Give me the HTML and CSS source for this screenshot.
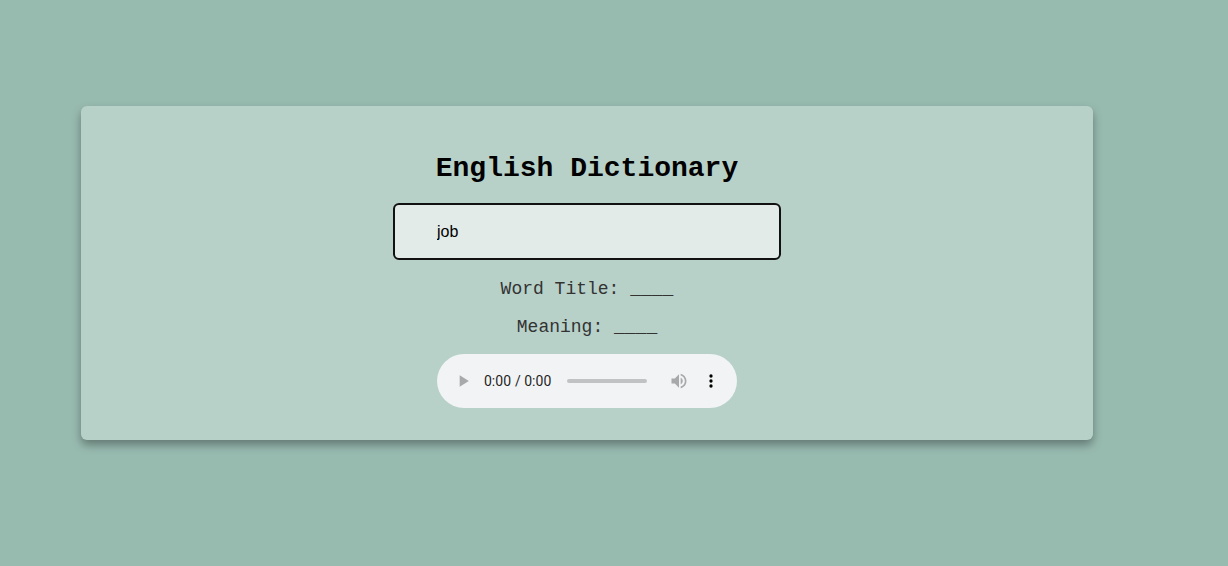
FILE: index.html
```html
<!DOCTYPE html>
<html lang="en">
<head>
<meta charset="utf-8">
<title>English Dictionary</title>
<link rel="stylesheet" href="styles.css">
</head>
<body>
<div class="page">
  <div class="card">
    <h1 class="title">English Dictionary</h1>
    <input class="search" type="text" value="job">
    <p class="line">Word Title: <span class="blank">____</span></p>
    <p class="line meaning">Meaning: <span class="blank">____</span></p>
    <audio class="player" controls></audio>
  </div>
</div>
</body>
</html>
```
FILE: styles.css
```css
html, body {
  margin: 0;
  padding: 0;
  background: #98bbb0;
  height: 100%;
}
.page {
  padding: 106px 0 0 81px;
}
.card {
  width: 1012px;
  height: 334px;
  box-sizing: border-box;
  background: #b7d1c9;
  border-radius: 6px;
  box-shadow: 0 5px 10px rgba(0, 0, 0, 0.35);
  display: flex;
  flex-direction: column;
  align-items: center;
  padding-top: 47px;
}
.title {
  margin: 0;
  font-family: "Liberation Mono", "Courier New", monospace;
  font-size: 28px;
  font-weight: bold;
  line-height: 32px;
  color: #000;
}
.search {
  margin-top: 18px;
  width: 388px;
  height: 57px;
  box-sizing: border-box;
  border: 2px solid #111;
  border-radius: 6px;
  background: #e2ebe8;
  padding: 0 0 0 42px;
  font-family: "Liberation Sans", Arial, sans-serif;
  font-size: 16px;
  color: #000;
  outline: none;
}
.line {
  margin: 19px 0 0;
  font-family: "Liberation Mono", "Courier New", monospace;
  font-size: 18px;
  line-height: 20px;
  color: #333;
}
.line.meaning {
  margin-top: 18px;
}
.blank {
  color: #333;
}
.player {
  margin-top: 17px;
  width: 300px;
  height: 54px;
}
```
